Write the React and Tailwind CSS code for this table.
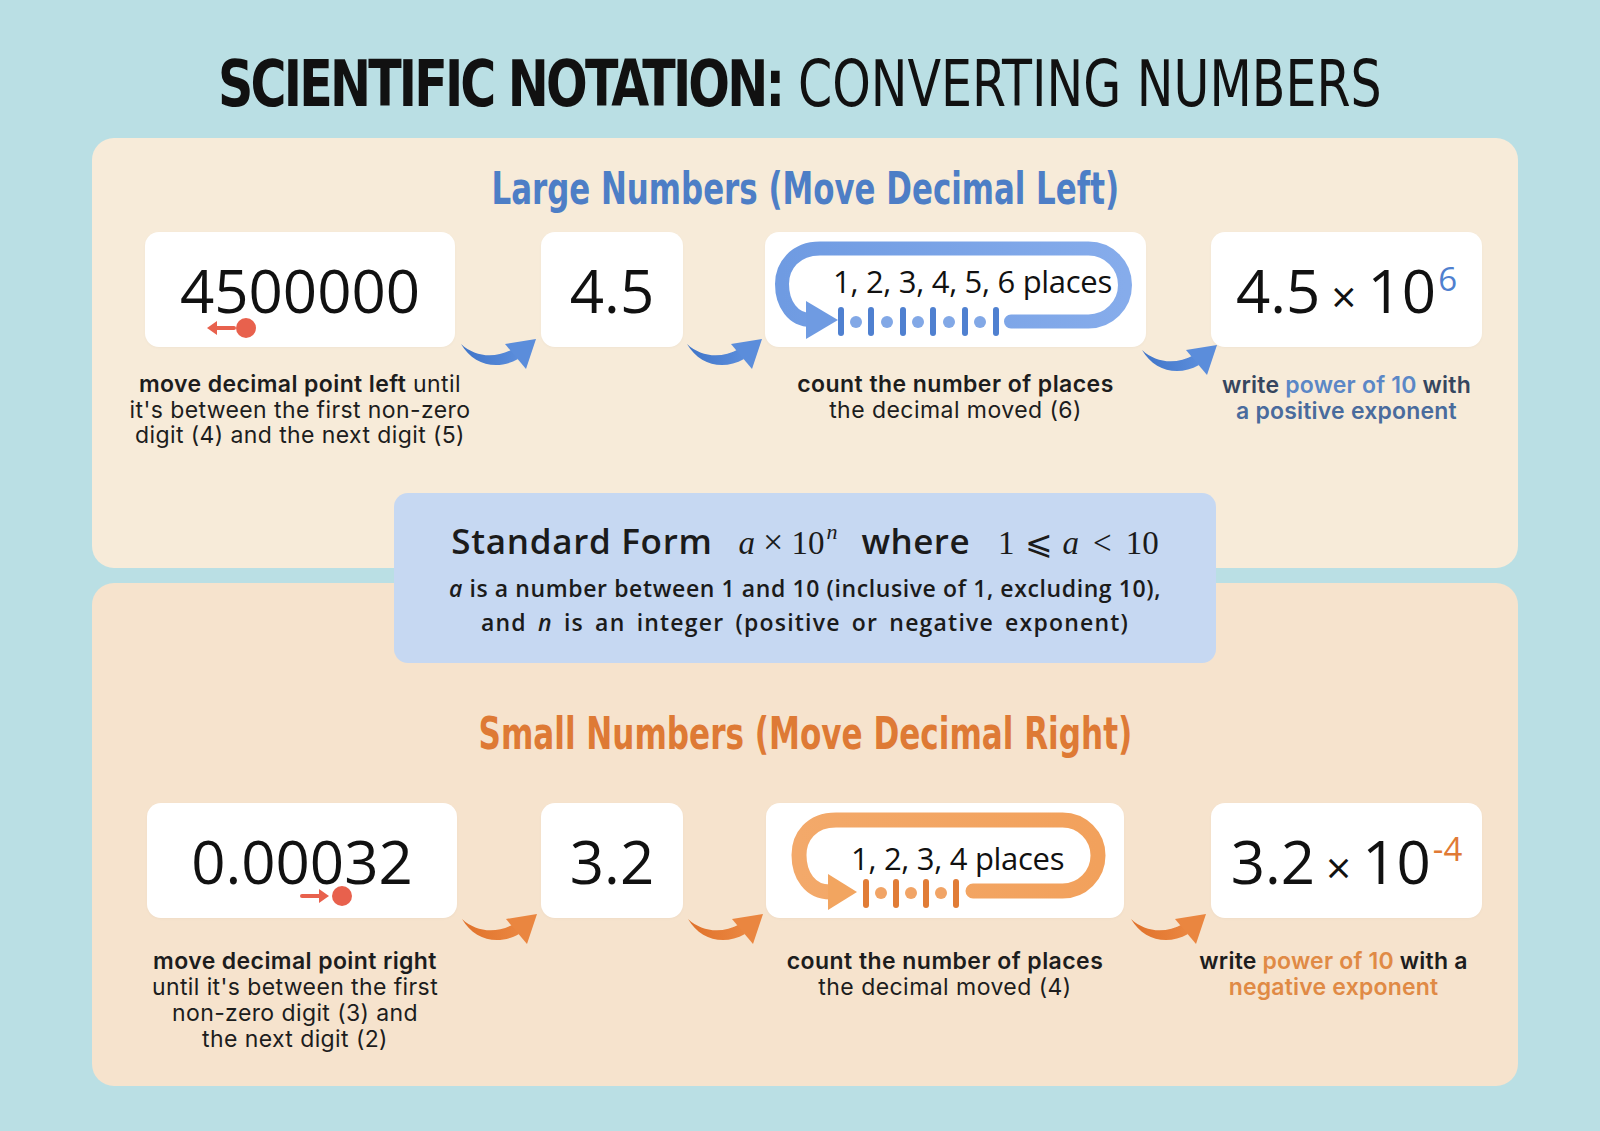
import React from "react";

const BODY = "font-['Open_Sans','Noto_Sans',sans-serif]";
const CAP = "font-['Inter','Open_Sans',sans-serif]";
const COND = "font-['Liberation_Sans_Narrow','DejaVu_Sans_Condensed','Liberation_Sans',sans-serif]";
const SERIF = "font-['Liberation_Serif','DejaVu_Serif',serif]";

function CurveArrow({ c1, c2, id }) {
  return (
    <svg width="78" height="34" viewBox="0 0 78 34" className="overflow-visible">
      <defs>
        <linearGradient id={id} x1="0" y1="0" x2="1" y2="0">
          <stop offset="0" stopColor={c1} />
          <stop offset="1" stopColor={c2} />
        </linearGradient>
      </defs>
      <path d="M2 8 C 16 21, 36 23, 54 13 L 59 23 C 38 35, 14 29, 2 8 Z" fill={`url(#${id})`} />
      <polygon points="77,3 46,8 67,33" fill={c2} />
    </svg>
  );
}

function Loop({ top }) {
  if (top) {
    return (
      <svg className="absolute inset-0" width="381" height="115" viewBox="0 0 381 115">
        <defs>
          <linearGradient id="lb" x1="0" y1="0" x2="1" y2="0">
            <stop offset="0" stopColor="#6f9be2" />
            <stop offset="1" stopColor="#86aceb" />
          </linearGradient>
        </defs>
        <path
          d="M246 89.5 H323.5 A36.5 36.5 0 0 0 323.5 16.5 H55 C30 16.5 17 34 17 52 C17 72 28 88 46 88"
          fill="none"
          stroke="url(#lb)"
          strokeWidth="14"
          strokeLinecap="round"
        />
        <polygon points="73,88 41,69 41,107" fill="#6f9be2" />
        {[76, 106, 138, 168, 200, 231].map((x) => (
          <rect key={x} x={x - 3} y="75" width="6" height="29" rx="3" fill="#4f80d0" />
        ))}
        {[91, 122, 153, 184, 215].map((x) => (
          <circle key={x} cx={x} cy="90" r="6" fill="#82a8e6" />
        ))}
      </svg>
    );
  }
  return (
    <svg className="absolute inset-0" width="358" height="115" viewBox="0 0 358 115">
      <defs>
        <linearGradient id="lo" x1="0" y1="0" x2="1" y2="0">
          <stop offset="0" stopColor="#f3a96a" />
          <stop offset="1" stopColor="#f2a15c" />
        </linearGradient>
      </defs>
      <path
        d="M207 88 H296.5 A35.5 35.5 0 0 0 296.5 17 H70 C45 17 33 34 33 52 C33 72 44 89 64 89"
        fill="none"
        stroke="url(#lo)"
        strokeWidth="15"
        strokeLinecap="round"
      />
      <polygon points="91,89 62,71 62,107" fill="#f2a560" />
      {[100, 130, 160, 190].map((x) => (
        <rect key={x} x={x - 3} y="76" width="6" height="29" rx="3" fill="#e17c36" />
      ))}
      {[115, 145, 175].map((x) => (
        <circle key={x} cx={x} cy="90" r="6" fill="#f1a466" />
      ))}
    </svg>
  );
}

function Card({ w, children, className = "" }) {
  return (
    <div
      className={`relative h-[115px] rounded-[14px] bg-white flex items-center justify-center shadow-[0_1px_3px_rgba(0,0,0,0.03)] ${className}`}
      style={{ width: w }}
    >
      {children}
    </div>
  );
}

function Num({ children }) {
  return <span className={`${BODY} text-[60px] leading-none text-[#111]`}>{children}</span>;
}

function Gap({ w, top, children }) {
  return (
    <div className="flex justify-center shrink-0" style={{ width: w, paddingTop: top }}>
      <div className="h-[34px]">{children}</div>
    </div>
  );
}

export default function App() {
  return (
    <div className={`relative w-[1600px] h-[1131px] overflow-hidden bg-[#badfe4] ${BODY}`}>
      {/* Title */}
      <div className="h-[138px] pt-[52px] flex justify-center">
        <div className={`inline-block ${COND} text-[64px] leading-[64px] text-[#111] scale-x-[0.852] whitespace-nowrap origin-center`}>
          <span className="font-bold tracking-[-3.3px]">SCIENTIFIC NOTATION:</span>
          <span className="font-normal"> CONVERTING NUMBERS</span>
        </div>
      </div>

      {/* Top panel */}
      <div className="ml-[92px] w-[1426px] h-[430px] rounded-[22px] bg-[#f7ebd9] pt-[27px]">
        <div className="flex justify-center">
          <div className={`inline-block ${COND} font-bold text-[44px] leading-[48px] text-[#4d7ec6] scale-x-[0.78] whitespace-nowrap`}>
            Large Numbers (Move Decimal Left)
          </div>
        </div>
        <div className="mt-[19px] flex pl-[53px]">
          {/* col 1 */}
          <div className="flex flex-col items-center shrink-0 w-[310px]">
            <Card w={310}>
              <Num>4500000</Num>
              <div className="absolute left-[60px] top-[86px] flex items-center">
                <svg width="32" height="18" viewBox="0 0 32 18">
                  <path d="M2 9 L12 2 L12 16 Z" fill="#e8614d" />
                  <rect x="9" y="7" width="22" height="4" rx="2" fill="#e8614d" />
                </svg>
                <span className="w-[20px] h-[20px] rounded-full bg-[#e8614d] -ml-[1px]" />
              </div>
            </Card>
            <div className={`${CAP} mt-[25px] text-center text-[23px] leading-[25.5px] text-[#1d1d1d] whitespace-nowrap tracking-[0.4px]`}>
              <span className="font-semibold">move decimal point left</span> until
              <br />
              it's between the first non-zero
              <br />
              digit (4) and the next digit (5)
            </div>
          </div>
          <Gap w={86} top={104}>
            <CurveArrow c1="#3f74c8" c2="#5b8ddb" id="ab1" />
          </Gap>
          {/* col 2 */}
          <div className="flex flex-col items-center shrink-0 w-[142px]">
            <Card w={142}>
              <Num>4.5</Num>
            </Card>
          </div>
          <Gap w={82} top={104}>
            <CurveArrow c1="#3f74c8" c2="#5b8ddb" id="ab2" />
          </Gap>
          {/* col 3 */}
          <div className="flex flex-col items-center shrink-0 w-[381px]">
            <Card w={381}>
              <Loop top />
              <div className="absolute left-[68px] top-[34px] text-[31px] leading-[31px] text-[#111] whitespace-nowrap tracking-[-0.3px]">
                1, 2, 3, 4, 5, 6 places
              </div>
            </Card>
            <div className={`${CAP} mt-[25px] text-center text-[23px] leading-[25.5px] text-[#1d1d1d] whitespace-nowrap tracking-[0.45px]`}>
              <span className="font-semibold">count the number of places</span>
              <br />
              the decimal moved (6)
            </div>
          </div>
          <Gap w={65} top={110}>
            <CurveArrow c1="#3f74c8" c2="#5b8ddb" id="ab3" />
          </Gap>
          {/* col 4 */}
          <div className="flex flex-col items-center shrink-0 w-[271px]">
            <Card w={271}>
              <Num>
                4.5<span className="text-[44px] mx-[11px]">×</span>10
                <span className="relative -top-[22px] text-[33px] text-[#4f80cf] ml-[2px]">6</span>
              </Num>
            </Card>
            <div className={`${CAP} mt-[26px] text-center text-[23px] leading-[25.5px] font-semibold whitespace-nowrap text-[#36465f] tracking-[0.2px]`}>
              write <span className="text-[#5b87c6]">power of 10</span> with
              <br />
              <span className="text-[#4a6b9d]">a positive exponent</span>
            </div>
          </div>
        </div>
      </div>

      {/* Bottom panel */}
      <div className="mt-[15px] ml-[92px] w-[1426px] h-[503px] rounded-[22px] bg-[#f6e3cd] pt-[127px]">
        <div className="flex justify-center">
          <div className={`inline-block ${COND} font-bold text-[44px] leading-[48px] text-[#de7a35] scale-x-[0.785] whitespace-nowrap`}>
            Small Numbers (Move Decimal Right)
          </div>
        </div>
        <div className="mt-[45px] flex pl-[55px]">
          {/* col 1 */}
          <div className="flex flex-col items-center shrink-0 w-[310px]">
            <Card w={310}>
              <Num>0.00032</Num>
              <div className="absolute left-[152px] top-[83px] flex items-center">
                <svg width="32" height="18" viewBox="0 0 32 18">
                  <rect x="1" y="7" width="22" height="4" rx="2" fill="#e8614d" />
                  <path d="M30 9 L20 2 L20 16 Z" fill="#e8614d" />
                </svg>
                <span className="w-[20px] h-[20px] rounded-full bg-[#e8614d] ml-[1px]" />
              </div>
            </Card>
            <div className={`${CAP} mt-[30px] mr-[14px] text-center text-[23px] leading-[26px] text-[#1d1d1d] whitespace-nowrap tracking-[0.4px]`}>
              <span className="font-semibold">move decimal point right</span>
              <br />
              until it's between the first
              <br />
              non-zero digit (3) and
              <br />
              the next digit (2)
            </div>
          </div>
          <Gap w={84} top={108}>
            <CurveArrow c1="#e0712a" c2="#ea8640" id="ao1" />
          </Gap>
          {/* col 2 */}
          <div className="flex flex-col items-center shrink-0 w-[142px]">
            <Card w={142}>
              <Num>3.2</Num>
            </Card>
          </div>
          <Gap w={83} top={108}>
            <CurveArrow c1="#e0712a" c2="#ea8640" id="ao2" />
          </Gap>
          {/* col 3 */}
          <div className="flex flex-col items-center shrink-0 w-[358px]">
            <Card w={358}>
              <Loop />
              <div className="absolute left-[85px] top-[40px] text-[31px] leading-[31px] text-[#111] whitespace-nowrap tracking-[-0.3px]">
                1, 2, 3, 4 places
              </div>
            </Card>
            <div className={`${CAP} mt-[30px] text-center text-[23px] leading-[26px] text-[#1d1d1d] whitespace-nowrap tracking-[0.45px]`}>
              <span className="font-semibold">count the number of places</span>
              <br />
              the decimal moved (4)
            </div>
          </div>
          <Gap w={87} top={108}>
            <CurveArrow c1="#e0712a" c2="#ea8640" id="ao3" />
          </Gap>
          {/* col 4 */}
          <div className="flex flex-col items-center shrink-0 w-[271px]">
            <Card w={271}>
              <Num>
                3.2<span className="text-[44px] mx-[11px]">×</span>10
                <span className="relative -top-[23px] text-[33px] text-[#e07a35] ml-[2px]">-4</span>
              </Num>
            </Card>
            <div className={`${CAP} mt-[30px] mr-[26px] text-center text-[23px] leading-[26px] font-semibold whitespace-nowrap text-[#1d1d1d] tracking-[0.2px]`}>
              write <span className="text-[#e08a45]">power of 10</span> with a
              <br />
              <span className="text-[#e08a45]">negative exponent</span>
            </div>
          </div>
        </div>
      </div>

      {/* Standard form box overlapping both panels */}
      <div className="absolute left-[394px] top-[493px] w-[822px] h-[170px] rounded-[14px] bg-[#c6d8f2] pt-[28px] flex flex-col items-center text-[#1b1b1b]">
        <div className="flex items-baseline leading-[40px] whitespace-nowrap">
          <span className="text-[35px] font-semibold tracking-[0.7px]">Standard Form</span>
          <span className={`${SERIF} text-[33px] ml-[26px]`}>
            <i>a</i>
            <span className="text-[36px] mx-[8px]">×</span>10
            <span className="italic text-[22px] relative -top-[15px] ml-[2px]">n</span>
          </span>
          <span className="text-[35px] font-semibold tracking-[0.5px] ml-[24px]">where</span>
          <span className={`${SERIF} text-[33px] ml-[28px]`}>
            1<span className="mx-[10px]">⩽</span>
            <i>a</i>
            <span className="mx-[14px]">&lt;</span>10
          </span>
        </div>
        <div className="mt-[4px] text-[23px] leading-[35px] font-semibold whitespace-nowrap tracking-[0.6px]">
          <i>a</i> is a number between 1 and 10 (inclusive of 1, excluding 10),
        </div>
        <div className="text-[23px] leading-[32px] font-semibold whitespace-nowrap tracking-[1.2px] [word-spacing:4px]">
          and <i>n</i> is an integer (positive or negative exponent)
        </div>
      </div>
    </div>
  );
}
